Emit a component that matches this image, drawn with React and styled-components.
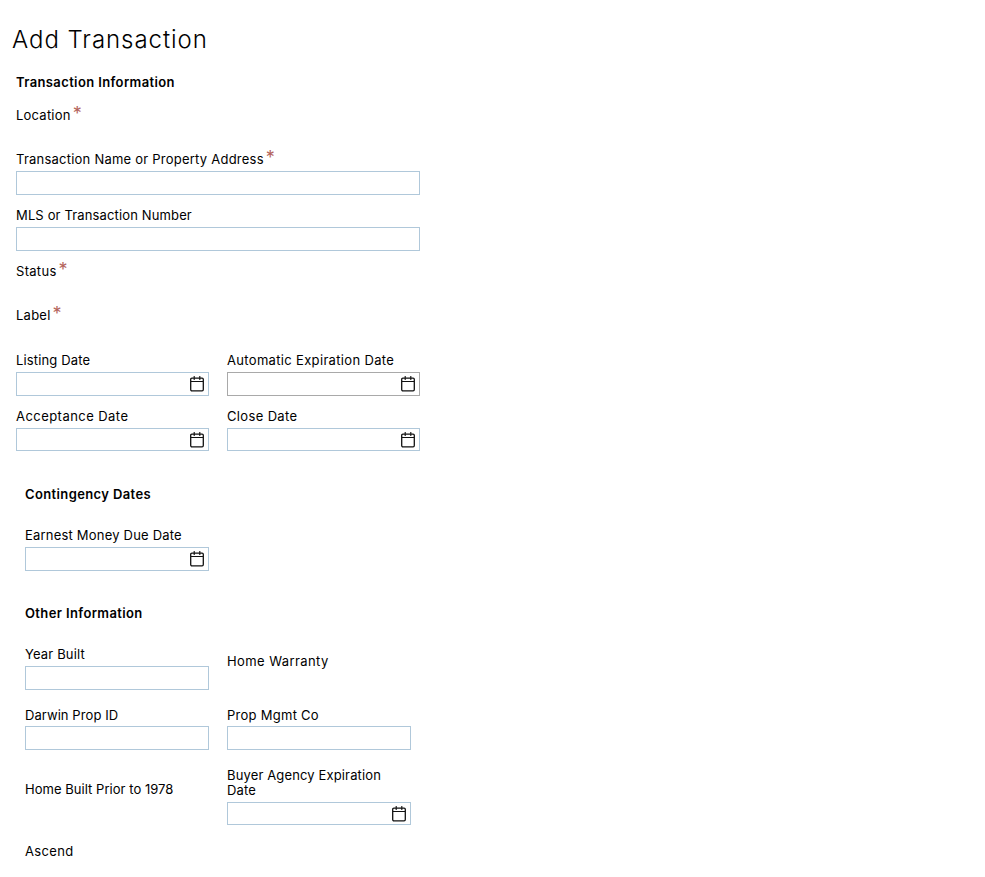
import React from 'react';
import styled, { createGlobalStyle, css } from 'styled-components';


const GlobalStyle = createGlobalStyle`
  * {
    box-sizing: border-box;
  }

  body {
    margin: 0;
    background: #fff;
    color: #000;
    font-family: Inter, 'Open Sans', sans-serif;
    font-size: 13px;
    line-height: 15px;
  }
`;

export const Page = styled.main`
  min-height: 877px;
  padding: 22px 0 0 16px;
  overflow: hidden;
`;

export const PageTitle = styled.h1`
  margin: 0 0 0 -4px;
  font-size: 24px;
  font-weight: 350;
  line-height: 36px;
  letter-spacing: 0.95px;
`;

export const Form = styled.form`
  width: 404px;
`;

export const SectionTitle = styled.h2`
  margin: ${({ top }) => top}px 0 ${({ bottom }) => bottom}px;
  font-size: 13px;
  font-weight: 600;
  line-height: 15px;
  white-space: nowrap;
  letter-spacing: 0.38px;
`;

export const Row = styled.div`
  display: grid;
  grid-template-columns: repeat(2, minmax(0, 1fr));
  column-gap: 18px;
  height: ${({ h }) => h}px;
  align-items: start;
`;

export const Inset = styled.div`
  padding: 0 9px;
`;

export const FieldWrapper = styled.div`
  ${({ h }) =>
    h &&
    css`
      height: ${h}px;
    `}
  padding-top: ${({ offset }) => offset || 0}px;
`;

export const Label = styled.label`
  display: flex;
  min-height: 15px;
  white-space: pre;
`;

export const LabelText = styled.span`
  letter-spacing: ${({ track }) => track || 0}px;
`;

export const Required = styled.span`
  height: 15px;
  margin-left: 2px;
  color: #b4645c;
  font-size: 18px;
  line-height: 12px;
`;

export const InputBox = styled.div`
  display: flex;
  align-items: center;
  height: ${({ h }) => h}px;
  margin-top: ${({ gap }) => gap}px;
  padding-right: 4px;
  border: 1px solid ${({ muted }) => (muted ? '#a9a9a9' : '#b0c8da')};
  background: #fff;
`;

export const Input = styled.input`
  flex: 1;
  min-width: 0;
  height: 100%;
  padding: 0 4px;
  border: 0;
  outline: 0;
  background: transparent;
  font: inherit;
`;

const CalendarIcon = () => (
  <svg width="14" height="16" viewBox="0 0 14 16" fill="none" stroke="#111">
    <rect x="0.7" y="2.1" width="12.6" height="12.7" rx="1.2" strokeWidth="1.3" />
    <path d="M1 5.5H13M4.2 0V4M9.8 0V4" strokeWidth="1.1" />
  </svg>
);

export const Field = ({
  label,
  track,
  required,
  type,
  muted,
  boxHeight = 24,
  gap = 4,
  ...props
}) => {
  return (
    <FieldWrapper {...props}>
      <Label>
        <LabelText track={track}>{label}</LabelText>
        {required && <Required>*</Required>}
      </Label>
      {type && (
        <InputBox h={boxHeight} gap={gap} muted={muted}>
          <Input aria-label={label} />
          {type === 'date' && <CalendarIcon />}
        </InputBox>
      )}
    </FieldWrapper>
  );
};

const App = () => (
  <>
    <GlobalStyle />
    <Page>
      <PageTitle>Add Transaction</PageTitle>
      <Form>
        <SectionTitle top={17} bottom={18}>Transaction Information</SectionTitle>
        <Field label="Location" track={0.22} required h={44} />
        <Field
          label="Transaction Name or Property Address"
          track={0.23}
          required
          type="text"
          h={56}
        />
        <Field label="MLS or Transaction Number" track={0.14} type="text" h={56} />
        <Field label="Status" track={0.3} required h={44} />
        <Field label="Label" track={0.25} required h={45} />
        <Row h={56}>
          <Field label="Listing Date" track={0.15} type="date" />
          <Field label="Automatic Expiration Date" track={0.33} type="date" muted />
        </Row>
        <Row h={42}>
          <Field label="Acceptance Date" track={0.45} type="date" boxHeight={23} />
          <Field label="Close Date" track={0.35} type="date" boxHeight={23} />
        </Row>
        <Inset>
          <SectionTitle top={36} bottom={26}>Contingency Dates</SectionTitle>
          <Row h={43}>
            <Field label="Earnest Money Due Date" track={0.2} type="date" />
          </Row>
          <SectionTitle top={35} bottom={26}>Other Information</SectionTitle>
          <Row h={61}>
            <Field label="Year Built" track={0.15} type="text" />
            <Field label="Home Warranty" track={0.42} offset={7} />
          </Row>
          <Row h={60}>
            <Field label="Darwin Prop ID" track={0.08} type="text" gap={3} />
            <Field label="Prop Mgmt Co" track={0.27} type="text" gap={3} />
          </Row>
          <Row h={76}>
            <Field label="Home Built Prior to 1978" track={0.04} offset={14} />
            <Field
              label={'Buyer Agency Expiration\nDate'}
              track={0.14}
              type="date"
              boxHeight={23}
            />
          </Row>
          <Field label="Ascend" track={0.35} />
        </Inset>
      </Form>
    </Page>
  </>
);

export default App;
